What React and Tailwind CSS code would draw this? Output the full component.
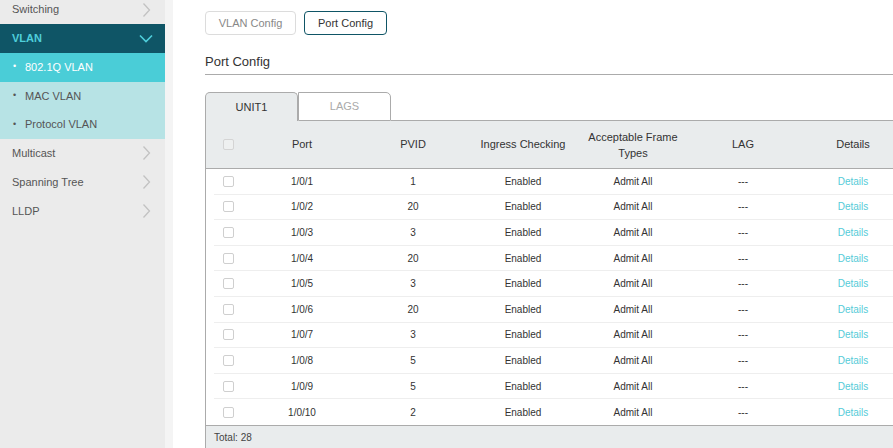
import React from 'react';

const MENU_TOP = ['Switching'];
const MENU_BOTTOM = ['Multicast', 'Spanning Tree', 'LLDP'];
const VLAN_SUB = [
  { label: '802.1Q VLAN', active: true },
  { label: 'MAC VLAN' },
  { label: 'Protocol VLAN' },
];

const PORTS = [
  { port: '1/0/1', pvid: 1 },
  { port: '1/0/2', pvid: 20 },
  { port: '1/0/3', pvid: 3 },
  { port: '1/0/4', pvid: 20 },
  { port: '1/0/5', pvid: 3 },
  { port: '1/0/6', pvid: 20 },
  { port: '1/0/7', pvid: 3 },
  { port: '1/0/8', pvid: 5 },
  { port: '1/0/9', pvid: 5 },
  { port: '1/0/10', pvid: 2 },
];

const ChevronRight = () => (
  <svg width="9" height="16" viewBox="0 0 9 16" fill="none">
    <path d="M1.5 1.5 L7.5 8 L1.5 14.5" stroke="#c2c2c2" strokeWidth="1.3" />
  </svg>
);

const ChevronDown = () => (
  <svg width="14" height="9" viewBox="0 0 14 9" fill="none">
    <path d="M1 1.5 L7 7.5 L13 1.5" stroke="#4fcfdb" strokeWidth="1.6" />
  </svg>
);

const Checkbox = () => (
  <span className="block w-[11px] h-[11px] border border-[#cfcfcf] rounded-[2px] bg-white"></span>
);

function MenuItem({ label }) {
  return (
    <div className="h-[28.75px] flex items-center justify-between pl-[12px] pr-[14px] text-[11px] text-[#555]">
      <span>{label}</span>
      <ChevronRight />
    </div>
  );
}

export default function App() {
  return (
    <div
      className="flex w-[893px] h-[448px] overflow-hidden bg-white text-[#333]"
      style={{ fontFamily: '"Liberation Sans", Arial, sans-serif' }}
    >
      {/* 사이드바 */}
      <div className="w-[165px] shrink-0 bg-[#ebebeb] -mt-[4.75px]">
        {MENU_TOP.map((m) => <MenuItem key={m} label={m} />)}
        <div className="h-[28.75px] flex items-center justify-between pl-[12px] pr-[12px] bg-[#0f5566] text-[11px] font-bold text-[#4fcfdb]">
          <span>VLAN</span>
          <ChevronDown />
        </div>
        {VLAN_SUB.map((s) => (
          <div
            key={s.label}
            className={`h-[28.75px] flex items-center pl-[13px] text-[11px] ${s.active ? 'bg-[#4acdd7] text-white' : 'bg-[#b7e3e5] text-[#555]'}`}
          >
            <span className="w-[12px] text-[9px]">•</span>
            <span>{s.label}</span>
          </div>
        ))}
        {MENU_BOTTOM.map((m) => <MenuItem key={m} label={m} />)}
      </div>
      <div className="w-[8px] shrink-0 bg-[#f4f4f4]"></div>

      {/* 본문 */}
      <div className="flex-1 overflow-hidden pl-[32px] pt-[11px]">
        <div className="flex gap-[8px]">
          <button className="h-[24px] w-[91px] border border-[#dcdcdc] rounded-[4px] text-[11px] text-[#888] bg-white">
            VLAN Config
          </button>
          <button className="h-[24px] w-[83px] border border-[#0f5566] rounded-[4px] text-[11px] text-[#333] bg-white">
            Port Config
          </button>
        </div>

        <div className="mt-[19px] text-[13px] text-[#333] leading-[15px]">Port Config</div>
        <div className="mt-[5px] h-px bg-[#ababab] w-[760px]"></div>

        <div className="mt-[17px] flex">
          <div className="w-[93px] h-[29px] flex items-center justify-center bg-[#e9eced] border-t border-l border-r border-[#ababab] rounded-t-[5px] text-[11px] text-[#333]">
            UNIT1
          </div>
          <div className="w-[93px] h-[29px] flex items-center justify-center bg-white border border-[#ababab] rounded-tr-[5px] text-[11px] text-[#aaa]">
            LAGS
          </div>
          <div className="flex-1 border-b border-[#ababab]"></div>
        </div>

        <div className="w-[720px] border-l border-[#ababab]">
          {/* 헤더 */}
          <div className="grid grid-cols-[40px_112px_110px_110px_110px_110px_110px] h-[48px] items-center bg-[#e9eced] border-b border-[#ababab] text-[11px] text-[#333] text-center">
            <div className="pl-[17px]">
              <span className="block w-[11px] h-[11px] border border-[#d4d4d4] rounded-[2px] bg-[#eef0f0]"></span>
            </div>
            <div>Port</div>
            <div>PVID</div>
            <div>Ingress Checking</div>
            <div className="leading-[16px]">Acceptable Frame<br />Types</div>
            <div>LAG</div>
            <div>Details</div>
          </div>

          {/* 행 */}
          <div className="pl-[8px]">
            {PORTS.map((p, i) => (
              <div
                key={p.port}
                className={`grid grid-cols-[32px_112px_110px_110px_110px_110px_110px] h-[25.6px] items-center text-[10px] text-[#333] text-center ${i < PORTS.length - 1 ? 'border-b border-[#eeeeee]' : ''}`}
              >
                <div className="pl-[9px]"><Checkbox /></div>
                <div>{p.port}</div>
                <div>{p.pvid}</div>
                <div>Enabled</div>
                <div>Admit All</div>
                <div>---</div>
                <div className="text-[#55cbd8]">Details</div>
              </div>
            ))}
          </div>

          <div className="h-[24px] bg-[#e9eced] border-t border-[#ababab] pl-[8px] flex items-center text-[10px] text-[#444]">
            Total: 28
          </div>
        </div>
      </div>
    </div>
  );
}
